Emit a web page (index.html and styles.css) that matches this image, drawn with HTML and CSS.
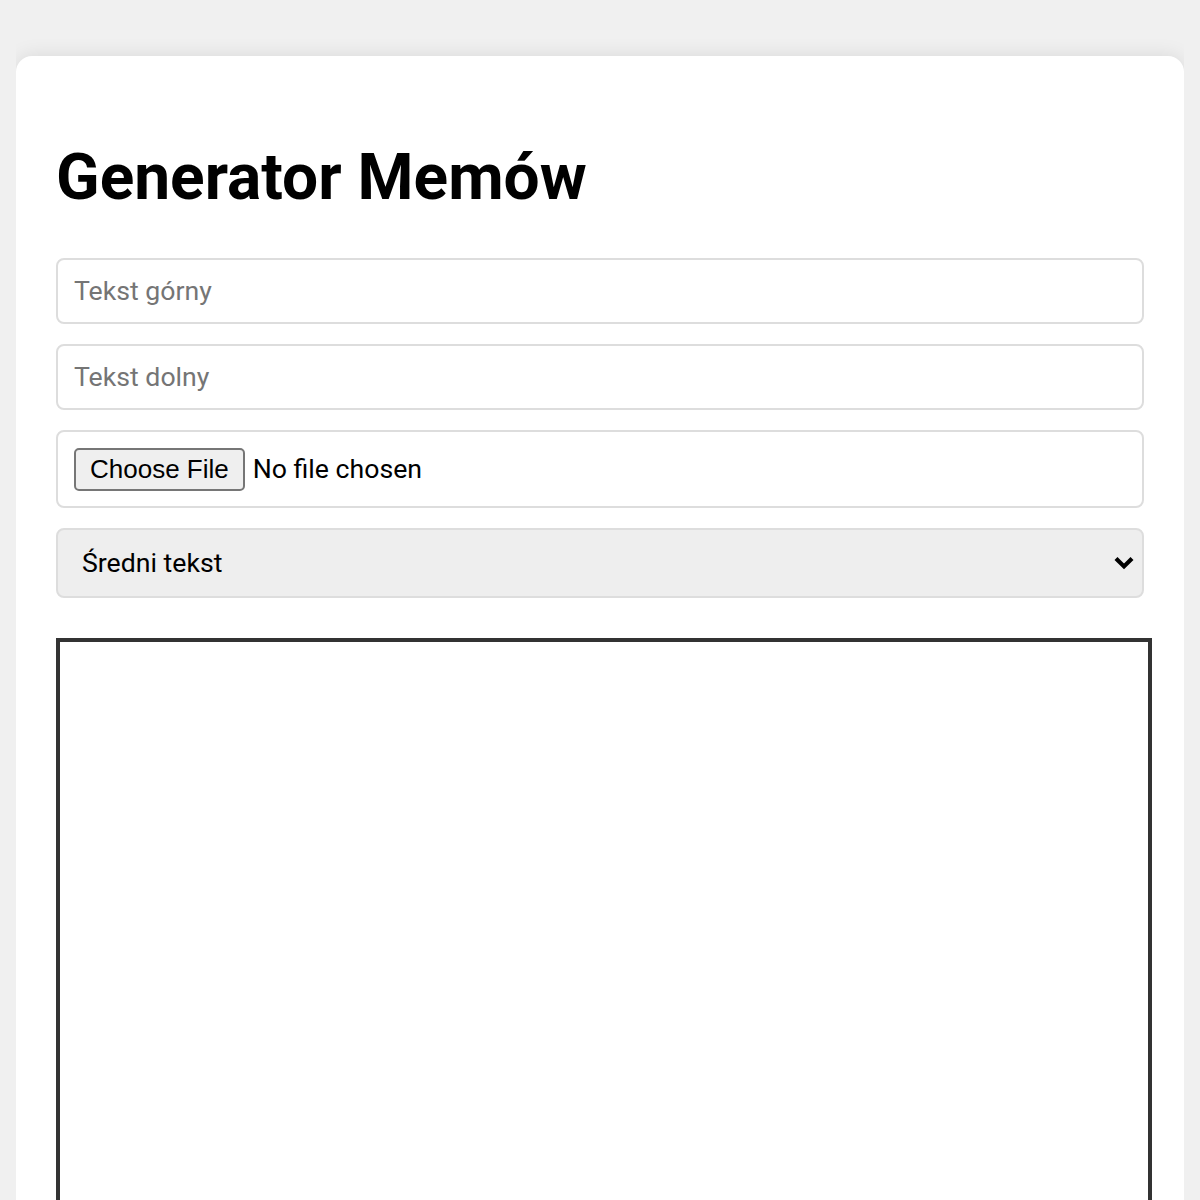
FILE: index.html
```html
<!DOCTYPE html>
<html lang="pl">
<head>
<meta charset="utf-8">
<title>Generator Memów</title>
<link rel="stylesheet" href="styles.css">
</head>
<body class="page">
  <div class="card">
    <h1 class="title">Generator Memów</h1>
    <input class="field text" type="text" placeholder="Tekst górny">
    <input class="field text" type="text" placeholder="Tekst dolny">
    <input class="field file" type="file" accept="image/*">
    <div class="select-wrap">
      <select class="field select">
        <option>Mały tekst</option>
        <option selected>Średni tekst</option>
        <option>Duży tekst</option>
      </select>
      <svg class="select-arrow" width="10" height="7" viewBox="0 0 10 7" aria-hidden="true">
        <path d="M1 1.2 L5 5.2 L9 1.2" fill="none" stroke="#000" stroke-width="2.1"/>
      </svg>
    </div>
    <canvas class="canvas" width="500" height="500"></canvas>
  </div>
</body>
</html>
```

FILE: styles.css
```css
html {
  background: #f0f0f0;
}

.page {
  zoom: 2;
  margin: 8px;
  background: #f0f0f0;
  font-family: Roboto, "Liberation Sans", sans-serif;
  color: #000;
}

.card {
  margin-top: 20px;
  background: #fff;
  padding: 20.5px 20px 20px;
  border-radius: 8px;
  box-shadow: 0 0 10px rgba(0, 0, 0, 0.1);
}

.title {
  font-size: 2em;
  font-weight: bold;
  margin: 0.67em 0;
}

.field {
  display: block;
  width: 100%;
  box-sizing: border-box;
  padding: 8px;
  margin-bottom: 10px;
  border: 1px solid #ddd;
  border-radius: 4px;
  font-family: Roboto, "Liberation Sans", sans-serif;
  font-size: 13.333px;
  background: #fff;
}

.text {
  height: 33px;
}

.file {
  height: 39px;
}

.file::file-selector-button {
  font-size: 13px;
  margin-right: 4px;
}

.select-wrap {
  position: relative;
  margin-bottom: 10px;
}

.select {
  -webkit-appearance: none;
  appearance: none;
  height: 35px;
  margin-bottom: 0;
  padding: 0 24px 0 12px;
  background: #eeeeee;
  color: #000;
}

.select-arrow {
  position: absolute;
  right: 5px;
  top: 14px;
  pointer-events: none;
}

.canvas {
  display: block;
  margin-top: 20px;
  width: 100%;
  height: auto;
  border: 2px solid #333;
}
```
